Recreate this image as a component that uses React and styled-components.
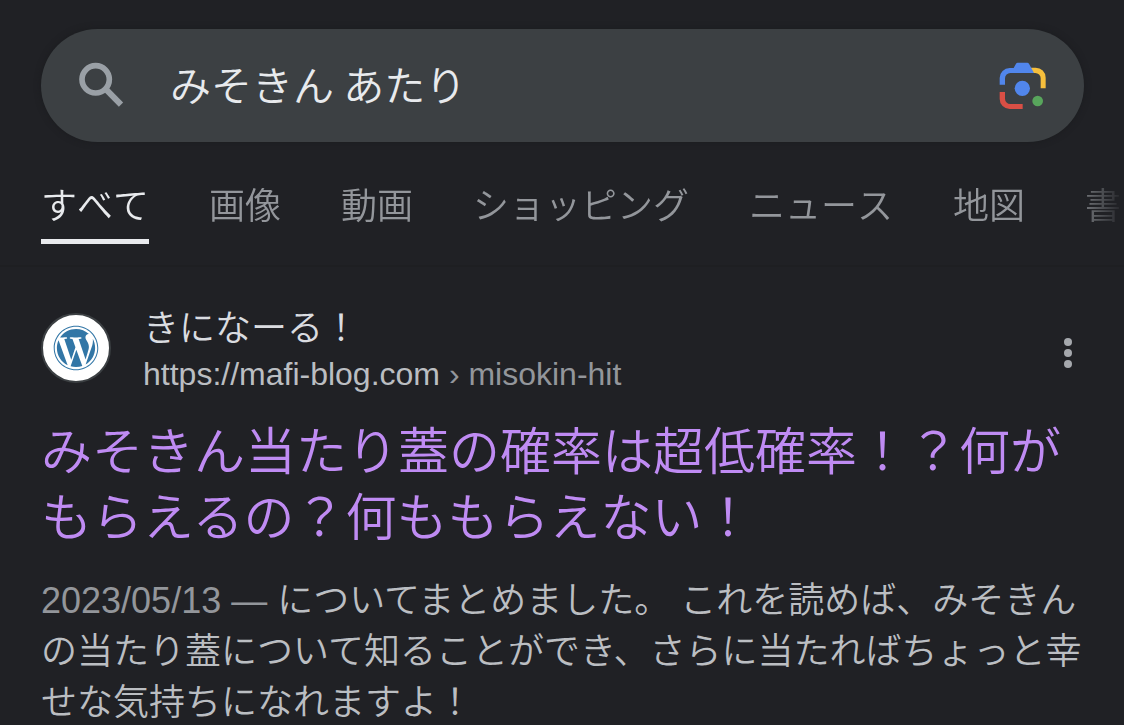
import React, { useState } from "react";
import styled, { createGlobalStyle } from "styled-components";
import { FaWordpress } from "react-icons/fa";

const GlobalStyle = createGlobalStyle`
  * { box-sizing: border-box; }
  html { background: #202125; scrollbar-width: none; }
  body {
    margin: 0;
    color: #bbbec2;
    font-family: "Liberation Sans", "Noto Sans CJK JP", sans-serif;
    font-weight: 350;
    overflow-x: hidden;
  }
`;

const Header = styled.header`
  padding-top: 29px;
  padding-bottom: 21px;
  border-bottom: 2px solid #1e1f22;
`;

const SearchForm = styled.form`
  display: flex;
  align-items: center;
  height: 113px;
  margin: 0 40px 0 41px;
  padding: 0 37px;
  border-radius: 57px;
  background: #3c4043;
  box-shadow: 0 0 6px #1b1c1f;
`;

const IconButton = styled.button`
  display: flex;
  flex: none;
  padding: 0;
  border: 0;
  background: none;
  cursor: pointer;
`;

const SearchInput = styled.input`
  flex: 1;
  min-width: 0;
  height: 60px;
  margin: 0 24px 0 44px;
  padding: 0 0 6px;
  border: 0;
  outline: 0;
  background: none;
  color: #e8eaed;
  font: inherit;
  font-family: "Noto Sans CJK JP", sans-serif;
  font-size: 41px;
  line-height: 54px;
`;

const Tabs = styled.nav`
  display: flex;
  gap: 60px;
  margin-top: 39px;
  padding-left: 41px;
  overflow: hidden;
  font-kerning: none;
  mask-image: linear-gradient(to right, #000 calc(100% - 56px), transparent);
`;

const Tab = styled.a`
  flex: none;
  padding-bottom: 6px;
  border-bottom: 5px solid ${(p) => (p.$active ? "#e8eaed" : "transparent")};
  color: ${(p) => (p.$active ? "#e8eaed" : "#93969b")};
  font-size: 36px;
  line-height: 52px;
  text-decoration: none;
  white-space: nowrap;
`;

const Result = styled.article`
  padding: 39px 40px 0 41px;
`;

const Source = styled.div`
  display: flex;
  align-items: center;
`;

const Favicon = styled.span`
  display: flex;
  flex: none;
  align-items: center;
  align-self: flex-start;
  justify-content: center;
  width: 70px;
  height: 70px;
  margin: 7px 32px 0 0;
  border: 2px solid #3c4043;
  border-radius: 50%;
  background: #fff;
  color: #3276a6;
`;

const SourceText = styled.div`
  flex: 1;
  min-width: 0;
  padding-bottom: 4px;
`;

const SiteName = styled.div`
  color: #dadce0;
  font-size: 36px;
  line-height: 46px;
`;

const SiteUrl = styled.cite`
  display: block;
  color: #bbbec2;
  font-size: 32px;
  font-style: normal;
  line-height: 44px;
`;

const Muted = styled.span`
  color: #93969b;
`;

const TitleLink = styled.a`
  color: #bf8bf3;
  text-decoration: none;
`;

const Title = styled.h3`
  margin: 20px 0 0;
  font-size: 51px;
  font-weight: inherit;
  line-height: 66px;
`;

const Snippet = styled.p`
  margin: 23px -16px 0 0;
  font-size: 36px;
  line-height: 51px;
`;

function SearchIcon() {
  return (
    <svg width="48" height="48" viewBox="0 0 144 144" fill="none" stroke="#9aa0a6" aria-hidden="true">
      <circle cx="53" cy="52" r="41" strokeWidth="17" />
      <path d="M84 82 129 128" strokeWidth="18" />
    </svg>
  );
}

function LensIcon() {
  return (
    <svg width="48" height="48" viewBox="0 0 144 144" aria-hidden="true">
      <path fill="#f6bf3c" d="M96 17h14a30 30 0 0 1 30 30v32h-15V49a16 16 0 0 0-16-16H96z" />
      <path fill="#5186ec" d="M2 68V48a30 30 0 0 1 30-30h12L51 5q2-3 5-3h29q3 0 5 3l15 28H34a16 16 0 0 0-16 16v19z" />
      <path fill="#d94f45" d="M2 90v21a30 30 0 0 0 30 30h39v-15H34a16 16 0 0 1-16-16V90z" />
      <circle fill="#5186ec" cx="70" cy="79" r="23" />
      <circle fill="#58a55c" cx="116" cy="117" r="16" />
    </svg>
  );
}

function MoreIcon() {
  return (
    <svg width="32" height="32" viewBox="0 0 32 32" fill="#a5a8ad" aria-hidden="true">
      <circle cx="16" cy="5" r="4" />
      <circle cx="16" cy="16" r="4" />
      <circle cx="16" cy="27" r="4" />
    </svg>
  );
}

const tabs = ["すべて", "画像", "動画", "ショッピング", "ニュース", "地図", "書籍"];

export default function App() {
  const [query, setQuery] = useState("みそきん あたり");
  return (
    <>
      <GlobalStyle />
      <Header>
        <SearchForm role="search" onSubmit={(e) => e.preventDefault()}>
          <IconButton type="submit" aria-label="検索">
            <SearchIcon />
          </IconButton>
          <SearchInput
            aria-label="検索キーワード"
            value={query}
            onChange={(e) => setQuery(e.target.value)}
          />
          <IconButton type="button" aria-label="画像で検索">
            <LensIcon />
          </IconButton>
        </SearchForm>
        <Tabs>
          {tabs.map((name, i) => (
            <Tab key={name} href="#" $active={i === 0} aria-current={i === 0 ? "page" : undefined}>
              {name}
            </Tab>
          ))}
        </Tabs>
      </Header>
      <main>
        <Result>
          <Source>
            <Favicon>
              <FaWordpress size={46} aria-hidden="true" />
            </Favicon>
            <SourceText>
              <SiteName>きになーる！</SiteName>
              <SiteUrl>
                https://mafi-blog.com<Muted> › misokin-hit</Muted>
              </SiteUrl>
            </SourceText>
            <IconButton type="button" aria-label="この検索結果について">
              <MoreIcon />
            </IconButton>
          </Source>
          <Title>
            <TitleLink href="#">みそきん当たり蓋の確率は超低確率！？何がもらえるの？何ももらえない！</TitleLink>
          </Title>
          <Snippet>
            <Muted>2023/05/13 — </Muted>
            についてまとめました。 これを読めば、みそきんの当たり蓋について知ることができ、さらに当たればちょっと幸せな気持ちになれますよ！
          </Snippet>
        </Result>
      </main>
    </>
  );
}
